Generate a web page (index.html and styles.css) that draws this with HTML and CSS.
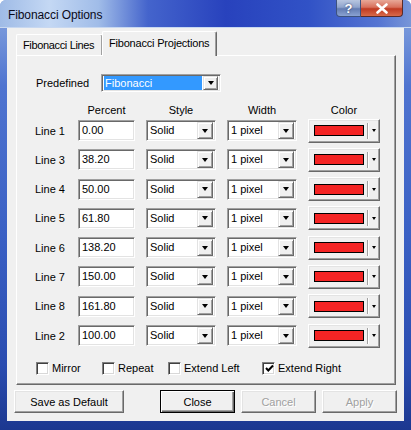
FILE: index.html
```html
<!DOCTYPE html>
<html>
<head>
<meta charset="utf-8">
<link rel="stylesheet" href="styles.css">
</head>
<body>
<div class="window">
  <div class="titlebar">
    <span class="title">Fibonacci Options</span>
    <div class="caption-btns">
      <div class="cbtn help">?</div>
      <div class="cbtn close">
        <svg width="14" height="11" viewBox="0 0 14 11"><path d="M2.5 1.5 L11.5 9.5 M11.5 1.5 L2.5 9.5" stroke="#fff" stroke-width="2.6" stroke-linecap="round"/></svg>
      </div>
    </div>
  </div>
  <div class="client">
    <div class="tabs">
      <div class="tab">Fibonacci Lines</div>
      <div class="tab active">Fibonacci Projections</div>
    </div>
    <div class="panel">
      <div class="predef">
        <span class="predef-label">Predefined</span>
        <div class="sunken predef-select">
          <span class="hl">Fibonacci</span>
          <span class="dd"><i class="tri"></i></span>
        </div>
      </div>
      <div class="grid head">
        <span></span><span>Percent</span><span>Style</span><span>Width</span><span>Color</span>
      </div>
      <div class="grid rows">
        <span class="lbl">Line 1</span><div class="sunken edit">0.00</div><div class="sunken combo"><span class="val">Solid</span><span class="dd"><i class="tri"></i></span></div><div class="sunken combo"><span class="val">1 pixel</span><span class="dd"><i class="tri"></i></span></div><div class="colorbtn"><span class="swatch"></span><span class="sep"></span><i class="tri small"></i></div>
        <span class="lbl">Line 3</span><div class="sunken edit">38.20</div><div class="sunken combo"><span class="val">Solid</span><span class="dd"><i class="tri"></i></span></div><div class="sunken combo"><span class="val">1 pixel</span><span class="dd"><i class="tri"></i></span></div><div class="colorbtn"><span class="swatch"></span><span class="sep"></span><i class="tri small"></i></div>
        <span class="lbl">Line 4</span><div class="sunken edit">50.00</div><div class="sunken combo"><span class="val">Solid</span><span class="dd"><i class="tri"></i></span></div><div class="sunken combo"><span class="val">1 pixel</span><span class="dd"><i class="tri"></i></span></div><div class="colorbtn"><span class="swatch"></span><span class="sep"></span><i class="tri small"></i></div>
        <span class="lbl">Line 5</span><div class="sunken edit">61.80</div><div class="sunken combo"><span class="val">Solid</span><span class="dd"><i class="tri"></i></span></div><div class="sunken combo"><span class="val">1 pixel</span><span class="dd"><i class="tri"></i></span></div><div class="colorbtn"><span class="swatch"></span><span class="sep"></span><i class="tri small"></i></div>
        <span class="lbl">Line 6</span><div class="sunken edit">138.20</div><div class="sunken combo"><span class="val">Solid</span><span class="dd"><i class="tri"></i></span></div><div class="sunken combo"><span class="val">1 pixel</span><span class="dd"><i class="tri"></i></span></div><div class="colorbtn"><span class="swatch"></span><span class="sep"></span><i class="tri small"></i></div>
        <span class="lbl">Line 7</span><div class="sunken edit">150.00</div><div class="sunken combo"><span class="val">Solid</span><span class="dd"><i class="tri"></i></span></div><div class="sunken combo"><span class="val">1 pixel</span><span class="dd"><i class="tri"></i></span></div><div class="colorbtn"><span class="swatch"></span><span class="sep"></span><i class="tri small"></i></div>
        <span class="lbl">Line 8</span><div class="sunken edit">161.80</div><div class="sunken combo"><span class="val">Solid</span><span class="dd"><i class="tri"></i></span></div><div class="sunken combo"><span class="val">1 pixel</span><span class="dd"><i class="tri"></i></span></div><div class="colorbtn"><span class="swatch"></span><span class="sep"></span><i class="tri small"></i></div>
        <span class="lbl">Line 2</span><div class="sunken edit">100.00</div><div class="sunken combo"><span class="val">Solid</span><span class="dd"><i class="tri"></i></span></div><div class="sunken combo"><span class="val">1 pixel</span><span class="dd"><i class="tri"></i></span></div><div class="colorbtn"><span class="swatch"></span><span class="sep"></span><i class="tri small"></i></div>
      </div>
      <div class="checks">
        <label class="chk"><span class="box"></span>Mirror</label>
        <label class="chk"><span class="box"></span>Repeat</label>
        <label class="chk"><span class="box"></span>Extend Left</label>
        <label class="chk"><span class="box"><svg width="9" height="9" viewBox="0 0 9 9"><path d="M1 4 L3.3 6.5 L8 1.5" fill="none" stroke="#000" stroke-width="2"/></svg></span>Extend Right</label>
      </div>
    </div>
    <div class="buttons">
      <div class="btn save">Save as Default</div>
      <div class="btn def">Close</div>
      <div class="btn disabled">Cancel</div>
      <div class="btn disabled">Apply</div>
    </div>
  </div>
</div>
</body>
</html>
```

FILE: styles.css
```css
html, body {
  margin: 0;
  padding: 0;
  background: #ffffff;
}
body {
  font-family: "Liberation Sans", Arial, sans-serif;
  font-size: 11px;
  color: #000;
}
.window {
  width: 411px;
  height: 430px;
  box-sizing: border-box;
  display: flex;
  flex-direction: column;
  border-radius: 6px 6px 0 0;
  background: linear-gradient(180deg, #8aa8e0 0%, #4f74d0 20%, #3a60c4 55%, #2a4cb0 85%, #1c3890 100%);
  overflow: hidden;
}
.titlebar {
  height: 28px;
  flex: none;
  display: flex;
  align-items: flex-start;
  padding: 0 8px 0 8px;
  background: linear-gradient(90deg, #9fbbe6 0%, #c4d8f4 12%, #a0bce8 24%, #4464cc 36%, #2842bd 55%, #3152c6 75%, #5575d2 92%, #7896d8 100%);
  box-shadow: inset 0 -1px 0 #c8d8f0;
}
.title {
  font-size: 12px;
  line-height: 14px;
  margin-top: 8px;
  color: #0a0a1a;
  letter-spacing: -0.1px;
}
.caption-btns {
  margin-left: auto;
  display: flex;
}
.cbtn {
  height: 17px;
  box-sizing: border-box;
  display: flex;
  align-items: center;
  justify-content: center;
  color: #fff;
  font-weight: bold;
  font-size: 13px;
}
.help {
  width: 25px;
  border: 1px solid #3d527e;
  border-top: none;
  border-radius: 0 0 0 4px;
  background: linear-gradient(180deg, #b8c6e0 0%, #90a4cc 45%, #637cb2 55%, #8aa2d2 100%);
  text-shadow: 0 0 2px #203060;
}
.close {
  width: 42px;
  border: 1px solid #5a2a28;
  border-top: none;
  border-left: none;
  border-radius: 0 0 4px 0;
  background: linear-gradient(180deg, #e8a898 0%, #d8705c 45%, #c03a22 55%, #d86a4a 100%);
}
.client {
  flex: none;
  height: 393px;
  margin: 0 7px;
  box-sizing: border-box;
  background: #f0f0f0;
  padding: 3px 8px 8px 9px;
  display: flex;
  flex-direction: column;
}
.tabs {
  height: 24px;
  display: flex;
  align-items: flex-end;
  flex: none;
}
.tab {
  box-sizing: border-box;
  height: 21px;
  padding: 4px 0 0 6px;
  width: 87px;
  background: #f0f0f0;
  border-top: 1px solid #ffffff;
  border-left: 1px solid #ffffff;
  border-right: 1px solid #696969;
  box-shadow: inset -1px 0 0 #a0a0a0;
  border-radius: 2px 2px 0 0;
  letter-spacing: -0.35px;
}
.tab.active {
  width: 115px;
  height: 25px;
  margin-left: -1px;
  margin-bottom: -1px;
  padding: 5px 0 0 6px;
  position: relative;
  z-index: 1;
  letter-spacing: -0.2px;
}
.panel {
  box-sizing: border-box;
  height: 330px;
  flex: none;
  border-top: 1px solid #ffffff;
  border-left: 1px solid #ffffff;
  border-right: 1px solid #696969;
  border-bottom: 1px solid #696969;
  box-shadow: inset -1px -1px 0 #a0a0a0;
  padding-top: 18px;
}
.predef {
  display: flex;
  align-items: center;
  height: 18px;
  padding-left: 19px;
}
.predef-label {
  width: 65px;
}
.sunken {
  box-sizing: border-box;
  background: #ffffff;
  border: 1px solid;
  border-color: #a0a0a0 #ffffff #ffffff #a0a0a0;
  box-shadow: inset 1px 1px 0 #696969, inset -1px -1px 0 #e3e3e3;
}
.predef-select {
  width: 120px;
  height: 18px;
  display: flex;
  align-items: center;
  padding: 2px;
}
.hl {
  flex: 1;
  height: 14px;
  line-height: 14px;
  background: #3399ff;
  color: #ffffff;
  padding-left: 1px;
  margin-right: 1px;
}
.dd {
  width: 15px;
  height: 14px;
  box-sizing: border-box;
  background: #f0f0f0;
  border: 1px solid;
  border-color: #e3e3e3 #696969 #696969 #e3e3e3;
  box-shadow: inset 1px 1px 0 #ffffff, inset -1px -1px 0 #a0a0a0;
  display: flex;
  align-items: center;
  justify-content: center;
}
.tri {
  display: block;
  width: 0;
  height: 0;
  border-left: 3.5px solid transparent;
  border-right: 3.5px solid transparent;
  border-top: 4px solid #000;
}
.tri.small {
  border-left-width: 2.5px;
  border-right-width: 2.5px;
  border-top-width: 3px;
  margin-left: 3px;
}
.grid {
  display: grid;
  grid-template-columns: 33px 57px 70px 70px 72px;
  column-gap: 11px;
  padding-left: 17px;
}
.head {
  margin-top: 11px;
  height: 14px;
  line-height: 14px;
}
.head span {
  text-align: center;
}
.rows {
  margin-top: 3px;
  grid-auto-rows: 21px;
  row-gap: 8.3px;
  align-items: center;
}
.lbl {
  padding-left: 1px;
  white-space: nowrap;
}
.edit {
  height: 21px;
  padding: 2px 0 0 3px;
  line-height: 14px;
}
.combo {
  height: 21px;
  display: flex;
  align-items: center;
  padding: 2px;
}
.combo .val {
  flex: 1;
  padding-left: 1px;
  line-height: 14px;
  align-self: flex-start;
}
.combo .dd {
  height: 17px;
  width: 16px;
}
.colorbtn {
  box-sizing: border-box;
  height: 24px;
  width: 72px;
  display: flex;
  align-items: center;
  background: #f0f0f0;
  border: 1px solid;
  border-color: #ffffff #696969 #696969 #ffffff;
  box-shadow: inset -1px -1px 0 #a0a0a0, inset 1px 1px 0 #e3e3e3;
  padding-left: 5px;
}
.swatch {
  width: 50px;
  height: 11px;
  box-sizing: border-box;
  background: #f42424;
  border: 1px solid #000;
}
.sep {
  width: 1px;
  height: 16px;
  background: #a0a0a0;
  border-right: 1px solid #ffffff;
  margin-left: 3px;
}
.checks {
  margin-top: 15px;
  height: 14px;
  display: grid;
  grid-template-columns: 66px 66px 94px auto;
  padding-left: 19px;
}
.chk {
  display: flex;
  align-items: center;
  gap: 3px;
  white-space: nowrap;
}
.box {
  box-sizing: border-box;
  width: 13px;
  height: 13px;
  background: #ffffff;
  border: 1px solid;
  border-color: #808080 #ffffff #ffffff #808080;
  box-shadow: inset 1px 1px 0 #404040, inset -1px -1px 0 #d8d8d8;
  display: flex;
  align-items: center;
  justify-content: center;
}
.box svg {
  display: block;
  margin: 0 0 0 1px;
}
.buttons {
  margin: 5px -1px 0 -2px;
  height: 23px;
  display: flex;
  gap: 6px;
}
.btn {
  box-sizing: border-box;
  width: 75px;
  height: 23px;
  display: flex;
  align-items: center;
  justify-content: center;
  background: #f0f0f0;
  border: 1px solid;
  border-color: #ffffff #696969 #696969 #ffffff;
  box-shadow: inset -1px -1px 0 #a0a0a0, inset 1px 1px 0 #e3e3e3;
}
.btn.save {
  width: 110px;
  margin-right: 30px;
}
.btn.def {
  border: 1px solid #000;
  box-shadow: inset 1px 1px 0 #ffffff, inset -1px -1px 0 #696969, inset -2px -2px 0 #a0a0a0;
}
.btn.disabled {
  color: #a0a0a0;
  text-shadow: 1px 1px 0 #ffffff;
}
```
